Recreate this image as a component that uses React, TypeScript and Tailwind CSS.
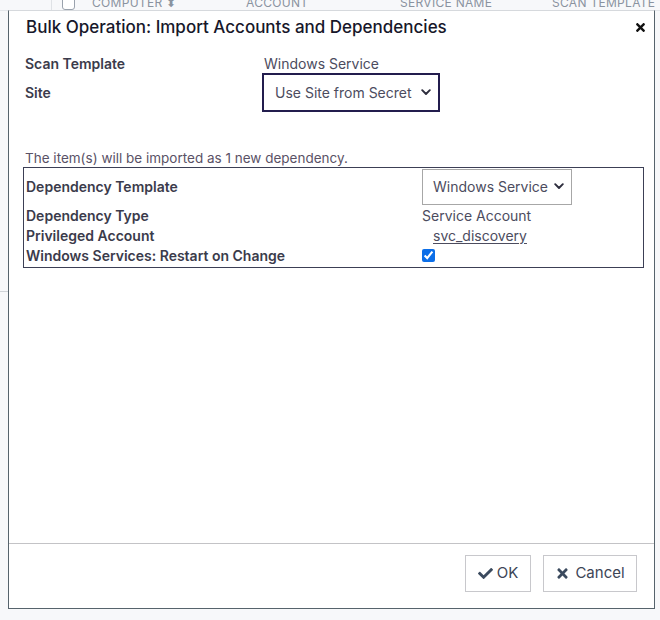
import { FaCheck, FaTimes } from "react-icons/fa";

const font = { fontFamily: "Inter, 'Noto Sans', sans-serif" };

function Chevron() {
  return (
    <svg width="10" height="7" viewBox="0 0 10 7" className="shrink-0">
      <path d="M1.2 1.2 5 5 8.8 1.2" fill="none" stroke="#2d2d3d" strokeWidth="1.9" strokeLinecap="round" strokeLinejoin="round" />
    </svg>
  );
}

function BackgroundTable() {
  return (
    <div className="absolute inset-0 text-[12px] tracking-wide text-[#8a93a0]">
      <div className="-mt-[5px] flex h-[16px] items-center border-b border-[#e3e6ea]">
        <div className="h-full w-[52px] border-r border-[#dfe2e6]" />
        <span className="ml-[10px] h-[14px] w-[13px] rounded-[3px] border border-[#9aa2ad] bg-white" />
        <span className="ml-[17px] w-[154px] whitespace-nowrap">COMPUTER ⬍</span>
        <span className="w-[154px]">ACCOUNT</span>
        <span className="w-[152px] whitespace-nowrap">SERVICE NAME</span>
        <span className="whitespace-nowrap">SCAN TEMPLATE</span>
      </div>
      <div className="mt-[280px] h-px w-[10px] bg-[#cfd3d8]" />
    </div>
  );
}

export default function App() {
  return (
    <div className="relative h-[620px] w-[660px] overflow-hidden bg-[#f7f8fa]" style={font}>
      <BackgroundTable />

      <div className="absolute left-[8px] top-[10px] flex h-[599px] w-[647px] flex-col border border-[#56636c] border-t-[#d6d9dd] bg-white">
        <div className="flex items-center justify-between pl-[17px] pr-[7px] pt-[4px]">
          <h1 className="whitespace-nowrap text-[17px] font-medium text-[#17172a]">Bulk Operation: Import Accounts and Dependencies</h1>
          <FaTimes className="text-[13px] text-[#111]" />
        </div>

        <div className="flex-1 px-[16px] pt-[13px]">
          <div className="grid grid-cols-[237px_1fr] items-center">
            <span className="h-[19px] whitespace-nowrap text-[14px] font-semibold leading-[19px] text-[#3b3b4b]">Scan Template</span>
            <span className="whitespace-nowrap pl-[2px] text-[14px] leading-[19px] text-[#4c4c5e]">Windows Service</span>
            <span className="text-[14px] font-semibold text-[#3b3b4b]">Site</span>
            <div className="flex h-[39px] w-[178px] items-center justify-between border-2 border-[#231d4e] bg-white pl-[11px] pr-[7px]">
              <span className="whitespace-nowrap text-[14px] text-[#4c4c5e]">Use Site from Secret</span>
              <Chevron />
            </div>
          </div>

          <p className="mt-[37px] whitespace-nowrap text-[13.5px] leading-[18px] text-[#5a5266]">The item(s) will be imported as 1 new dependency.</p>

          <div className="-ml-[2px] w-[621px] border border-[#3c3f55] px-[2px] py-[1px]">
            <div className="grid grid-cols-[396px_1fr] items-center text-[14px]">
              <span className="whitespace-nowrap font-semibold text-[#3b3b4b]">Dependency Template</span>
              <div className="flex h-[36px] w-[150px] items-center justify-between border border-[#a7a7a7] bg-white pl-[10px] pr-[7px]">
                <span className="whitespace-nowrap text-[#4c4c5e]">Windows Service</span>
                <Chevron />
              </div>
              <span className="h-[21px] whitespace-nowrap font-semibold leading-[21px] text-[#3b3b4b]">Dependency Type</span>
              <span className="whitespace-nowrap leading-[21px] text-[#4c4c5e]">Service Account</span>
              <span className="h-[20px] whitespace-nowrap font-semibold leading-[20px] text-[#3b3b4b]">Privileged Account</span>
              <span className="leading-[20px]">
                <a className="ml-[11px] text-[#4c4c5e] underline underline-offset-2">svc_discovery</a>
              </span>
              <span className="h-[20px] whitespace-nowrap font-semibold leading-[20px] text-[#3b3b4b]">Windows Services: Restart on Change</span>
              <span className="flex h-[20px] items-center">
                <input type="checkbox" defaultChecked className="m-0 h-[13px] w-[13px] accent-[#0b6ee8]" />
              </span>
            </div>
          </div>
        </div>

        <div className="flex h-[65px] justify-end gap-[12px] border-t border-[#c3c3c6] pr-[17px] pt-[11px]">
          <button className="flex h-[37px] w-[66px] items-center justify-center gap-[4px] border border-[#c8c8cc] bg-white text-[15px] text-[#3d4556]">
            <FaCheck className="text-[15px] text-[#3b4a5e]" />
            OK
          </button>
          <button className="flex h-[37px] w-[94px] items-center justify-center gap-[5px] border border-[#c8c8cc] bg-white text-[15px] text-[#3d4556]">
            <FaTimes className="text-[15px] text-[#3b4a5e]" />
            Cancel
          </button>
        </div>
      </div>
    </div>
  );
}
